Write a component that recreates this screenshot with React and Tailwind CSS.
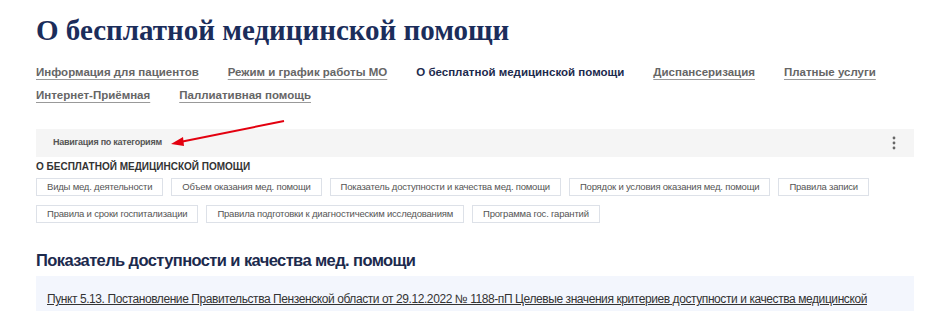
const navRow1 = [
  { label: "Информация для пациентов" },
  { label: "Режим и график работы МО" },
  { label: "О бесплатной медицинской помощи", active: true },
  { label: "Диспансеризация" },
  { label: "Платные услуги" },
];

const navRow2 = [{ label: "Интернет-Приёмная" }, { label: "Паллиативная помощь" }];

const chips = [
  "Виды мед. деятельности",
  "Объем оказания мед. помощи",
  "Показатель доступности и качества мед. помощи",
  "Порядок и условия оказания мед. помощи",
  "Правила записи",
  "Правила и сроки госпитализации",
  "Правила подготовки к диагностическим исследованиям",
  "Программа гос. гарантий",
];

function NavLink({ label, active }) {
  if (active) {
    return <span className="shrink-0 whitespace-nowrap text-[#1c2a4d]">{label}</span>;
  }
  return (
    <a
      href="#"
      className="shrink-0 whitespace-nowrap text-[#666] underline decoration-[#999] underline-offset-[3px]"
    >
      {label}
    </a>
  );
}

export default function App() {
  return (
    <div className="relative bg-white w-[944px] h-[311px] overflow-hidden font-['Liberation_Sans',sans-serif]">
      <div className="pl-9 pr-[30px] pt-[12px]">
        <h1 className="font-['Liberation_Serif',serif] font-bold text-[29px] leading-[36px] text-[#1b2d5b]">
          О бесплатной медицинской помощи
        </h1>

        <div className="mt-[15px] flex flex-col gap-[5px] text-[11.5px] font-bold leading-[18px]">
          <div className="flex gap-[29px]">
            {navRow1.map((n) => (
              <NavLink key={n.label} {...n} />
            ))}
          </div>
          <div className="flex gap-[29px]">
            {navRow2.map((n) => (
              <NavLink key={n.label} {...n} />
            ))}
          </div>
        </div>

        <div className="mt-[25px] h-[28px] bg-[#f5f5f5] flex items-center justify-between pl-[17px] pr-[18px]">
          <span className="text-[9px] tracking-[-0.25px] font-bold text-[#555]">Навигация по категориям</span>
          <svg width="4" height="14" viewBox="0 0 4 14" className="text-[#666]">
            <circle cx="2" cy="2" r="1.4" fill="currentColor" />
            <circle cx="2" cy="7" r="1.4" fill="currentColor" />
            <circle cx="2" cy="12" r="1.4" fill="currentColor" />
          </svg>
        </div>

        <div className="mt-[3px] text-[10px] font-bold uppercase text-[#333] leading-[14px]">
          О бесплатной медицинской помощи
        </div>

        <div className="mt-[4px] flex flex-wrap gap-x-[8px] gap-y-[9px] w-[860px]">
          {chips.map((c) => (
            <span
              key={c}
              className="h-[18px] px-[10px] flex items-center border border-[#dde1e8] text-[9.5px] tracking-[-0.2px] text-[#555] leading-none"
            >
              {c}
            </span>
          ))}
        </div>

        <h2 className="mt-[25px] text-[16.5px] font-bold leading-[24px] tracking-[-0.6px] text-[#1c2a4d]">
          Показатель доступности и качества мед. помощи
        </h2>

        <div className="mt-[4px] bg-[#f3f6fd] pl-[11px] pr-[40px] pt-[10px] pb-4">
          <a
            href="#"
            className="text-[12px] leading-[17px] text-[#333] underline tracking-[-0.42px]"
          >
            Пункт 5.13. Постановление Правительства Пензенской области от 29.12.2022 № 1188-пП Целевые значения критериев доступности и качества медицинской помощи, оказываемой в рамках Программы
          </a>
        </div>
      </div>

      <svg className="absolute left-0 top-0 pointer-events-none" width="944" height="311">
        <line x1="284" y1="121" x2="180" y2="142" stroke="#e3000f" strokeWidth="2" />
        <polygon points="171,144 183,137 184,146" fill="#e3000f" />
      </svg>
    </div>
  );
}
